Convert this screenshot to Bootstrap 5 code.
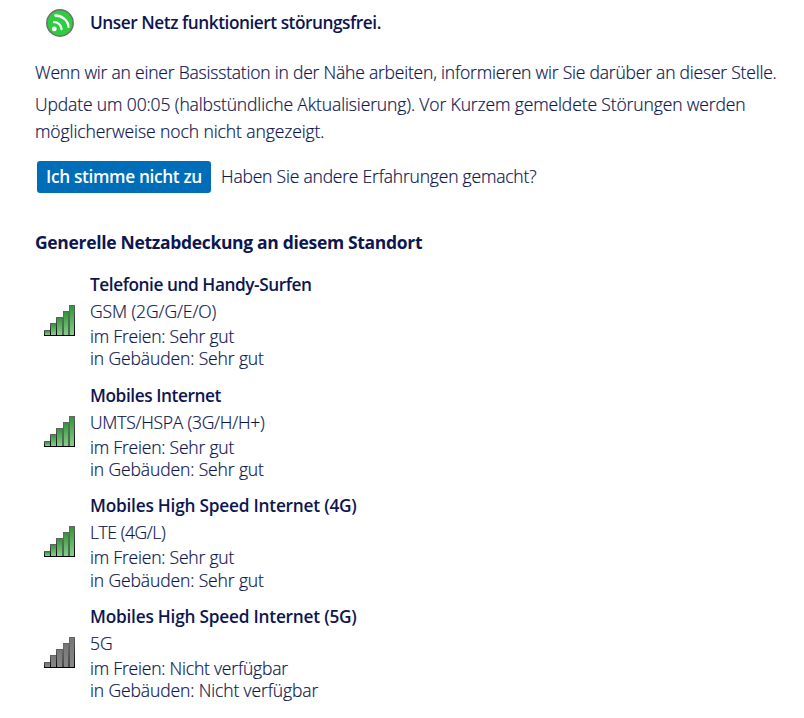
<!DOCTYPE html>
<html lang="de">
<head>
<meta charset="utf-8">
<meta name="viewport" content="width=device-width, initial-scale=1">
<title>Netzstatus</title>
<link href="https://cdn.jsdelivr.net/npm/bootstrap@5.3.0/dist/css/bootstrap.min.css" rel="stylesheet">
<style>
body{font-family:"Open Sans","Noto Sans",sans-serif;font-size:17.5px;font-weight:300;color:#0d1650;background:#fff;-webkit-text-stroke:.2px currentColor}
.page{width:804px;height:718px;padding:9px 0 0 35px;white-space:nowrap}
.status{height:28px;padding-left:11px;gap:16px}
.status .semi{padding-bottom:1px;letter-spacing:-.46px}
.semi{font-size:17.25px;font-weight:600;line-height:27px;letter-spacing:-.44px;-webkit-text-stroke:0}
.intro{margin-top:22px;line-height:27px;letter-spacing:-.205px}
.update{margin-top:5px;letter-spacing:-.122px}
.update span{letter-spacing:-.085px}
.feedback{margin-top:16px;padding-left:2px;gap:10px;letter-spacing:-.2px}
.question{line-height:27px;padding-bottom:2px}
.btn-disagree{--bs-btn-color:#fff;--bs-btn-bg:#006db8;--bs-btn-hover-color:#fff;--bs-btn-hover-bg:#005a99;width:174px;height:32px;padding:0;font-size:17.25px;font-weight:600;line-height:30px;letter-spacing:-.34px;border:0;border-radius:3px;-webkit-text-stroke:0}
.headline{margin:36px 0 15px;font-size:17.5px;font-weight:700;line-height:27px;letter-spacing:-.32px;-webkit-text-stroke:0}
.network{height:110.6px;padding-left:9px;gap:15px}
.signal{width:31px;height:31px;margin-top:34px}
.tech{line-height:27px;letter-spacing:-.1px}
.quality{line-height:22.4px;letter-spacing:-.2px}
.quality span{letter-spacing:-.12px}
.ls-internet{letter-spacing:-.42px}
.ls-speed{letter-spacing:-.22px}
.ls-umts{letter-spacing:-.24px}
.ls-lte{letter-spacing:-.42px}
</style>
</head>
<body>
<svg width="0" height="0" class="position-absolute" aria-hidden="true">
<defs>
<linearGradient id="green" x2="0" y2="1"><stop stop-color="#309638"/><stop offset="1" stop-color="#8ccb90"/></linearGradient>
<linearGradient id="gray" x2="0" y2="1"><stop stop-color="#777"/><stop offset="1" stop-color="#888"/></linearGradient>
<linearGradient id="edge" x2="0" y2="1"><stop stop-color="#666"/><stop offset="1" stop-color="#000"/></linearGradient>
<symbol id="bars" viewBox="0 0 31 31">
<g fill="url(#edge)"><rect y="25" width="7" height="6"/><rect x="6" y="18" width="7" height="13"/><rect x="12" y="12" width="8" height="19"/><rect x="19" y="6" width="7" height="25"/><rect x="25" width="6" height="31"/></g>
<rect x="1" y="26" width="5" height="4"/><rect x="7" y="19" width="5" height="11"/><rect x="13" y="13" width="5.5" height="17"/><rect x="19.5" y="7" width="5" height="23"/><rect x="25.5" y="1" width="4.5" height="29"/>
</symbol>
</defs>
</svg>
<main class="page overflow-hidden">
<div class="status d-flex align-items-center">
<svg width="28" height="28" viewBox="0 0 28 28" class="flex-shrink-0" aria-hidden="true">
<circle cx="14" cy="14" r="13.2" fill="#2ecc40" stroke="#707070" stroke-width="1.5"/>
<g fill="none" stroke="#fff" stroke-width="2.3" stroke-linecap="round"><path d="M9.3 6.5C15.8 6.5 22 11.3 22.5 17.8"/><path d="M8 13.2C12 13.2 15 16 15.5 20"/></g>
<circle cx="8.3" cy="19.9" r="2.4" fill="#fff"/>
</svg>
<div class="semi">Unser Netz funktioniert störungsfrei.</div>
</div>
<div class="intro">
<p class="mb-0">Wenn wir an einer Basisstation in der Nähe arbeiten, informieren wir Sie darüber an dieser Stelle.</p>
<p class="update mb-0">Update um 00:05 (halbstündliche Aktualisierung). Vor Kurzem gemeldete Störungen werden<br><span>möglicherweise noch nicht angezeigt.</span></p>
</div>
<div class="feedback d-flex align-items-center">
<button class="btn btn-disagree" type="button">Ich stimme nicht zu</button>
<div class="question">Haben Sie andere Erfahrungen gemacht?</div>
</div>
<h2 class="headline">Generelle Netzabdeckung an diesem Standort</h2>
<section class="network d-flex align-items-start">
<svg class="signal flex-shrink-0" fill="url(#green)"><use href="#bars"/></svg>
<div><div class="semi">Telefonie und Handy-Surfen</div><div class="tech">GSM (2G/G/E/O)</div><div class="quality">im Freien: Sehr gut<br><span>in Gebäuden: Sehr gut</span></div></div>
</section>
<section class="network d-flex align-items-start">
<svg class="signal flex-shrink-0" fill="url(#green)"><use href="#bars"/></svg>
<div><div class="semi ls-internet">Mobiles Internet</div><div class="tech ls-umts">UMTS/HSPA (3G/H/H+)</div><div class="quality">im Freien: Sehr gut<br><span>in Gebäuden: Sehr gut</span></div></div>
</section>
<section class="network d-flex align-items-start">
<svg class="signal flex-shrink-0" fill="url(#green)"><use href="#bars"/></svg>
<div><div class="semi ls-speed">Mobiles High Speed Internet (4G)</div><div class="tech ls-lte">LTE (4G/L)</div><div class="quality">im Freien: Sehr gut<br><span>in Gebäuden: Sehr gut</span></div></div>
</section>
<section class="network d-flex align-items-start">
<svg class="signal flex-shrink-0" fill="url(#gray)"><use href="#bars"/></svg>
<div><div class="semi ls-speed">Mobiles High Speed Internet (5G)</div><div class="tech">5G</div><div class="quality">im Freien: Nicht verfügbar<br><span>in Gebäuden: Nicht verfügbar</span></div></div>
</section>
</main>
</body>
</html>
